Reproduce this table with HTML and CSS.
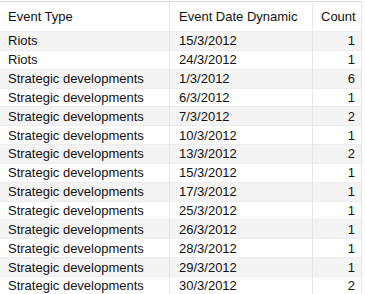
FILE: index.html
```html
<!DOCTYPE html>
<html>
<head>
<meta charset="utf-8">
<link rel="stylesheet" href="styles.css">
</head>
<body>
<div class="wrap">
<table class="grid">
<thead>
<tr><th class="c1">Event Type</th><th class="c2">Event Date Dynamic</th><th class="c3">Count</th></tr>
</thead>
<tbody>
<tr><td>Riots</td><td>15/3/2012</td><td class="num">1</td></tr>
<tr><td>Riots</td><td>24/3/2012</td><td class="num">1</td></tr>
<tr><td>Strategic developments</td><td>1/3/2012</td><td class="num">6</td></tr>
<tr><td>Strategic developments</td><td>6/3/2012</td><td class="num">1</td></tr>
<tr><td>Strategic developments</td><td>7/3/2012</td><td class="num">2</td></tr>
<tr><td>Strategic developments</td><td>10/3/2012</td><td class="num">1</td></tr>
<tr><td>Strategic developments</td><td>13/3/2012</td><td class="num">2</td></tr>
<tr><td>Strategic developments</td><td>15/3/2012</td><td class="num">1</td></tr>
<tr><td>Strategic developments</td><td>17/3/2012</td><td class="num">1</td></tr>
<tr><td>Strategic developments</td><td>25/3/2012</td><td class="num">1</td></tr>
<tr><td>Strategic developments</td><td>26/3/2012</td><td class="num">1</td></tr>
<tr><td>Strategic developments</td><td>28/3/2012</td><td class="num">1</td></tr>
<tr><td>Strategic developments</td><td>29/3/2012</td><td class="num">1</td></tr>
<tr><td>Strategic developments</td><td>30/3/2012</td><td class="num">2</td></tr>
</tbody>
</table>
</div>
</body>
</html>
```
FILE: styles.css
```css
html, body {
  margin: 0;
  padding: 0;
  background: #ffffff;
}
.wrap {
  width: 362px;
  padding-top: 1px;
}
.grid {
  width: 362px;
  border-collapse: collapse;
  table-layout: fixed;
  font-family: "Liberation Sans", Arial, sans-serif;
  font-size: 13px;
  color: #111111;
}
.grid th {
  font-weight: normal;
  text-align: left;
  height: 29px;
  padding: 0 0 0 8px;
  border-top: 1px solid #d8d8d8;
  border-right: 1px solid #e6e6e6;
  vertical-align: middle;
}
.grid th.c1 { width: 161px; }
.grid th.c2 { width: 133px; padding-left: 9px; }
.grid th.c3 { text-align: right; padding-right: 6px; border-right: 1px solid #e6e6e6; }
.grid td {
  height: 17.85px;
  padding: 0 0 0 8px;
  border-top: 1px solid #ececec;
  border-right: 1px solid #e6e6e6;
  line-height: 17px;
  white-space: nowrap;
}
.grid td:nth-child(2) { padding-left: 9px; }
.grid td.num { text-align: right; padding-right: 6px; padding-left: 0; }
.grid tbody tr:nth-child(odd) { background: #f4f4f4; }
```
